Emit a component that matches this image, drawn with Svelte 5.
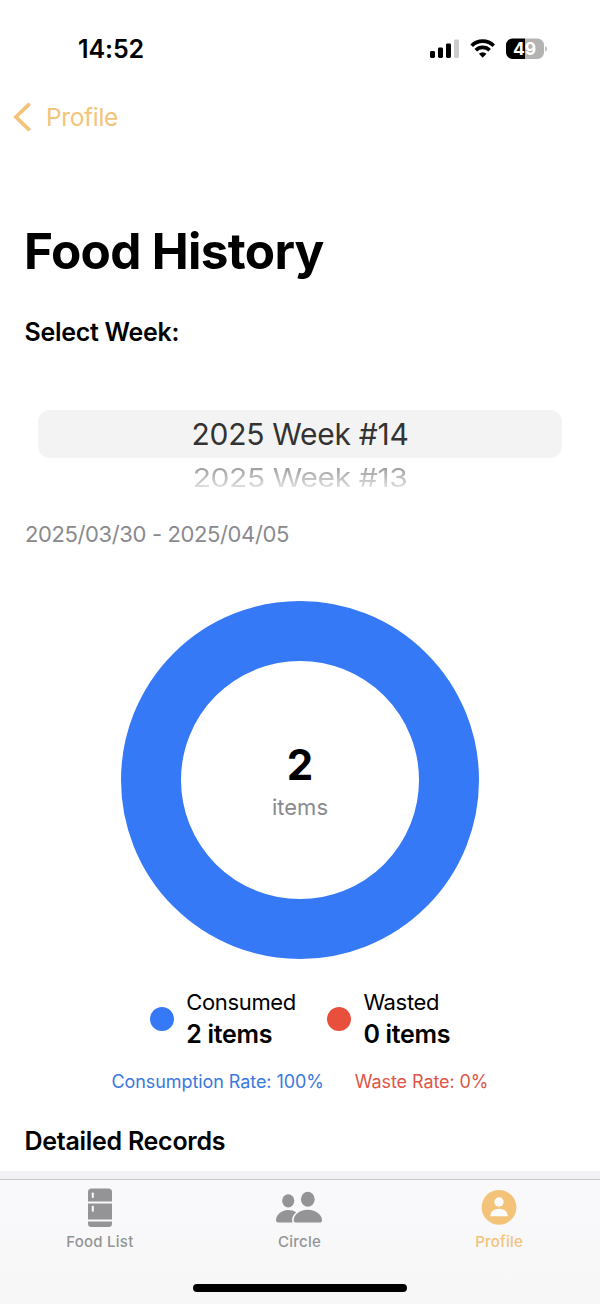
<script lang="ts">
    type Tab = { id: string; label: string };

    const weeks: string[] = ['2025 Week #14', '2025 Week #13'];
    const consumed: number = 2;
    const wasted: number = 0;

    const tabs: Tab[] = [
        { id: 'food', label: 'Food List' },
        { id: 'circle', label: 'Circle' },
        { id: 'profile', label: 'Profile' }
    ];

    let activeTab = $state('profile');

    const total = consumed + wasted;

    // Share of the total as a whole percentage
    function getRate(count: number): number {
        return total > 0 ? Math.round((count / total) * 100) : 0;
    }

    // Donut geometry
    const radius = 149;
    const circumference = 2 * Math.PI * radius;
    const wastedLength = (getRate(wasted) / 100) * circumference;
</script>

<div class="screen">
    <div class="status-bar">
        <span class="time">14:52</span>
        <svg class="status-icons" width="118" height="22" viewBox="0 0 118 22">
            <rect x="0" y="13" width="5" height="7" rx="1.4" />
            <rect x="8" y="9.5" width="5" height="10.5" rx="1.4" />
            <rect x="16" y="5.5" width="5" height="14.5" rx="1.4" />
            <rect x="24" y="1.5" width="5" height="18.5" rx="1.4" fill="#cbcbcb" />
            <g fill="none" stroke="#000" stroke-width="3.7">
                <path d="M41.7 7.7A15.6 15.6 0 0 1 63.7 7.7" />
                <path d="M45.8 12.3A9.7 9.7 0 0 1 59.6 12.3" />
            </g>
            <path d="M48.900 15.800Q52.7 12.7 56.500 15.800L52.7 19.7Z" />
            <path d="M82.5 .5H95V21H82.5A6.5 6.5 0 0 1 76 14.5V7A6.5 6.5 0 0 1 82.5 .5Z" />
            <path d="M95 .5H107.5A6.5 6.5 0 0 1 114 7V14.5A6.5 6.5 0 0 1 107.5 21H95Z" fill="#b3b3b3" />
            <path d="M115.3 8Q117 8.8 117 11T115.3 14Z" fill="#b3b3b3" />
            <text x="94.5" y="17" text-anchor="middle">49</text>
        </svg>
    </div>

    <button class="back">
        <svg width="18" height="30" viewBox="0 0 18 30">
            <path d="M15.5 2.8L2.8 15L15.5 27.2" />
        </svg>
        <span>Profile</span>
    </button>

    <main class="content">
        <h1>Food History</h1>
        <h2 class="select-label">Select Week:</h2>

        <div class="picker">
            <div class="picker-row selected"><span>{weeks[0]}</span></div>
            <div class="picker-row next"><span>{weeks[1]}</span></div>
        </div>

        <p class="range">2025/03/30 - 2025/04/05</p>

        <div class="chart">
            <svg class="ring" width="358" height="358" viewBox="0 0 358 358">
                <circle cx="179" cy="179" r={radius} stroke="#3579f6" />
                {#if wasted > 0}
                    <circle
                        cx="179"
                        cy="179"
                        r={radius}
                        stroke="#e94f3d"
                        stroke-dasharray="{wastedLength} {circumference}"
                    />
                {/if}
            </svg>
            <div class="chart-label">
                <strong>{total}</strong>
                <span>items</span>
            </div>
        </div>

        <div class="legend">
            <div class="legend-item">
                <span class="dot consumed"></span>
                <div>
                    <div class="legend-name">Consumed</div>
                    <div class="legend-count">{consumed} items</div>
                </div>
            </div>
            <div class="legend-item">
                <span class="dot wasted"></span>
                <div>
                    <div class="legend-name">Wasted</div>
                    <div class="legend-count">{wasted} items</div>
                </div>
            </div>
        </div>

        <div class="rates">
            <span class="rate-consumed">Consumption Rate: {getRate(consumed)}%</span>
            <span class="rate-wasted">Waste Rate: {getRate(wasted)}%</span>
        </div>

        <h2 class="records">Detailed Records</h2>
    </main>

    <div class="list-edge"></div>

    <nav class="tab-bar">
        {#each tabs as tab}
            <button class="tab" class:active={activeTab === tab.id} onclick={() => (activeTab = tab.id)}>
                <svg width="48" height="42" viewBox="0 0 48 42">
                    {#if tab.id === 'food'}
                        <path d="M12 14.5V5a3.5 3.5 0 0 1 3.5-3.5h17A3.5 3.5 0 0 1 36 5v9.5Z" />
                        <path d="M12 16.5H36V32.5H12Z" />
                        <path d="M12 34.5H36V36.5A3.5 3.5 0 0 1 32.5 40H15.5A3.5 3.5 0 0 1 12 36.5Z" />
                        <rect class="cutout" x="15.8" y="5.5" width="2" height="5.5" rx="0.8" />
                        <rect class="cutout" x="15.8" y="18.8" width="2" height="6" rx="0.8" />
                    {:else if tab.id === 'circle'}
                        <ellipse cx="13.2" cy="13.8" rx="6.1" ry="6.6" />
                        <ellipse cx="32.8" cy="12.3" rx="6.9" ry="7.5" />
                        <path d="M17.5 35.5H3.5Q1 35.5 1 33.2C1 28.5 6 23 13.2 23Q17.7 23 21.2 25.2C18.5 27.5 16 31.5 17.5 35.5Z" />
                        <path d="M21.5 35.5Q18.7 35.5 18.7 33.2C18.7 28.5 24 22.8 32.7 22.8S47 28.5 47 33.2Q47 35.5 44.3 35.5Z" />
                    {:else}
                        <circle cx="24" cy="20.3" r="17.4" />
                        <circle class="cutout" cx="24" cy="15" r="4.7" />
                        <path class="cutout" d="M15.2 29.3C15.2 24.700 18.800 21.700 24 21.700S32.800 24.700 32.800 29.300Z" />
                    {/if}
                </svg>
                <span>{tab.label}</span>
            </button>
        {/each}
        <div class="home-indicator"></div>
    </nav>
</div>

<style>
    :global(body) {
        margin: 0;
        background: #fff;
    }

    .screen {
        display: flex;
        flex-direction: column;
        width: 600px;
        height: 1304px;
        overflow: hidden;
        background: #fff;
        color: #000;
        font-family: Inter, 'Liberation Sans', sans-serif;
    }

    button {
        border: 0;
        padding: 0;
        background: none;
        font-family: inherit;
        color: inherit;
    }

    h1,
    h2,
    p {
        margin: 0;
    }

    .status-bar {
        display: flex;
        justify-content: space-between;
        align-items: center;
        box-sizing: border-box;
        height: 98px;
        padding: 0 52px 0 78px;
    }

    .time {
        font-size: 25px;
        font-weight: 600;
        letter-spacing: -0.1px;
    }

    .status-icons text {
        fill: #fff;
        font-size: 17.5px;
        font-weight: 700;
    }

    .back {
        display: flex;
        align-items: center;
        gap: 15px;
        height: 38px;
        padding-left: 13px;
        color: #f3c379;
        font-size: 24.5px;
        letter-spacing: -0.35px;
    }

    .back path {
        fill: none;
        stroke: currentColor;
        stroke-width: 3.8;
        stroke-linecap: round;
        stroke-linejoin: round;
    }

    .content {
        display: flex;
        flex-direction: column;
        height: 1035px;
        padding: 0 25px;
    }

    h1 {
        margin: 85px 0 0 -1px;
        font-size: 49.5px;
        font-weight: 700;
        letter-spacing: -0.7px;
        line-height: 61px;
    }

    h2 {
        margin-left: -0.5px;
        font-size: 25px;
        font-weight: 600;
        letter-spacing: -0.28px;
        line-height: 30px;
    }

    .select-label {
        margin-top: 35px;
    }

    .picker {
        height: 106px;
        margin: 63px 13px 0;
        overflow: hidden;
    }

    .picker-row {
        text-align: center;
        font-size: 30px;
        letter-spacing: -0.28px;
    }

    .picker-row.selected {
        height: 48px;
        border-radius: 12px;
        background: #f3f3f3;
        color: #333;
        line-height: 48px;
    }

    .picker-row.next {
        height: 38px;
        color: transparent;
        background: linear-gradient(#9b9b9b 20%, #dedede 80%);
        background-clip: text;
        letter-spacing: -0.4px;
        line-height: 38px;
        transform: scaleY(0.87);
    }

    .range {
        margin-top: 4px;
        color: #8a8a8e;
        font-size: 22px;
        letter-spacing: -0.38px;
        line-height: 28px;
    }

    .chart {
        display: grid;
        place-items: center;
        height: 358px;
        margin-top: 53px;
    }

    .chart > * {
        grid-area: 1 / 1;
    }

    .ring circle {
        fill: none;
        stroke-width: 60;
    }

    .chart-label {
        display: flex;
        flex-direction: column;
        align-items: center;
        padding-top: 4px;
    }

    .chart-label strong {
        font-size: 42px;
        font-weight: 700;
        line-height: 50px;
    }

    .chart-label span {
        color: #8a8a8e;
        font-size: 22px;
        line-height: 34px;
    }

    .legend {
        display: flex;
        justify-content: center;
        gap: 31px;
        margin-top: 28px;
    }

    .legend-item {
        display: flex;
        align-items: center;
        gap: 12.5px;
    }

    .dot {
        width: 24px;
        height: 24px;
        border-radius: 50%;
    }

    .dot.consumed {
        background: #3579f6;
    }

    .dot.wasted {
        background: #e94f3d;
    }

    .legend-name {
        font-size: 22px;
        letter-spacing: -0.35px;
        line-height: 31px;
    }

    .legend-count {
        font-size: 25px;
        font-weight: 600;
        letter-spacing: -0.3px;
        line-height: 32px;
    }

    .rates {
        display: flex;
        justify-content: center;
        gap: 31px;
        margin-top: 20px;
        font-size: 18px;
        letter-spacing: -0.08px;
        line-height: 24px;
    }

    .rate-consumed {
        color: #3b78e0;
    }

    .rate-wasted {
        color: #df5546;
    }

    .records {
        margin-top: 32px;
    }

    .list-edge {
        flex: none;
        height: 8px;
        background: #f1f1f6;
    }

    .tab-bar {
        position: relative;
        display: grid;
        grid-template-columns: repeat(3, 1fr);
        box-sizing: border-box;
        height: 125px;
        padding: 7px 1px 0 0;
        border-top: 1px solid #c8c8cb;
        background: linear-gradient(#f9f9fb, #f7f7f8);
    }

    .tab {
        display: flex;
        flex-direction: column;
        align-items: center;
        align-self: start;
        color: #949496;
        font-size: 15px;
        font-weight: 500;
        letter-spacing: 0.25px;
        line-height: 26px;
    }

    .tab svg {
        fill: currentColor;
    }

    .tab.active {
        color: #f3c379;
    }

    .cutout {
        fill: #fbfbfc;
    }

    .home-indicator {
        position: absolute;
        bottom: 12px;
        left: 193px;
        width: 214px;
        height: 8px;
        border-radius: 4px;
        background: #000;
    }
</style>
